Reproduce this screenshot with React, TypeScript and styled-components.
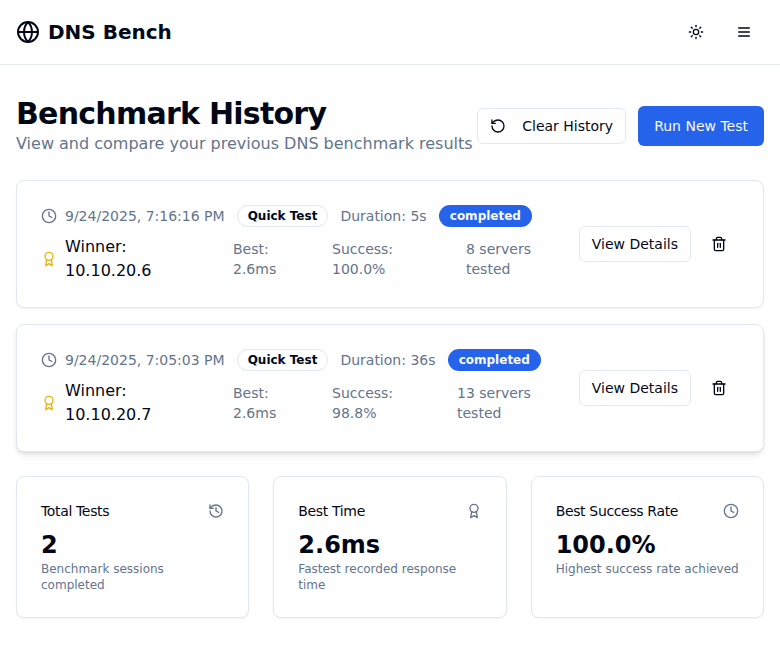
import React from 'react';
import styled, { createGlobalStyle } from 'styled-components';
import { Globe, Sun, RotateCcw, Clock, Trash2, History } from 'lucide-react';

const GlobalStyle = createGlobalStyle`
  *, *::before, *::after { box-sizing: border-box; }
  body {
    margin: 0;
    background: #fff;
    color: #020817;
    font-family: "DejaVu Sans", sans-serif;
    font-size: 16px;
    line-height: 24px;
  }
  h1, p { margin: 0; }
  svg { display: block; flex-shrink: 0; }
`;

const Glyph = styled.svg.attrs({ viewBox: '0 0 24 24' })`
  width: 16px;
  height: 16px;
  fill: none;
  stroke: currentColor;
  stroke-width: 2;
  stroke-linecap: round;
  stroke-linejoin: round;
`;

const MenuIcon = () => (
  <Glyph>
    <path d="M4 6h16M4 12h16M4 18h16" />
  </Glyph>
);

const AwardIcon = () => (
  <Glyph>
    <circle cx="12" cy="8" r="6" />
    <path d="M15.477 12.89 17 22l-5-3-5 3 1.523-9.11" />
  </Glyph>
);

const Header = styled.header`
  height: 65px;
  border-bottom: 1px solid #e2e8f0;
  padding: 0 16px;
  display: flex;
  align-items: center;
  justify-content: space-between;
`;

const Brand = styled.div`
  display: flex;
  align-items: center;
  gap: 8px;
  font-size: 20px;
  line-height: 28px;
  font-weight: 700;
`;

const HeaderActions = styled.div`
  display: flex;
  gap: 8px;
`;

const IconButton = styled.button<{ $height?: number }>`
  width: 40px;
  height: ${p => p.$height ?? 40}px;
  padding: 0;
  display: flex;
  align-items: center;
  justify-content: center;
  border: 0;
  border-radius: 6px;
  background: transparent;
  color: inherit;
`;

const Main = styled.main`
  padding: 31px 16px 32px;
`;

const PageHead = styled.div`
  display: flex;
  align-items: center;
  justify-content: space-between;
  margin-bottom: 24px;
`;

const Title = styled.h1`
  font-size: 30px;
  line-height: 36px;
  font-weight: 700;
  letter-spacing: -0.75px;
`;

const Subtitle = styled.p`
  color: #64748b;
  white-space: nowrap;
`;

const Actions = styled.div`
  display: flex;
  align-items: center;
  gap: 12px;
`;

const Button = styled.button<{ $primary?: boolean }>`
  height: ${p => (p.$primary ? 40 : 36)}px;
  padding: 0 ${p => (p.$primary ? 16 : 12)}px;
  display: flex;
  align-items: center;
  gap: 16px;
  border: ${p => (p.$primary ? '0' : '1px solid #e2e8f0')};
  border-radius: 6px;
  background: ${p => (p.$primary ? '#2563eb' : '#fff')};
  color: ${p => (p.$primary ? '#f8fafc' : '#020817')};
  font: 500 14px/20px "DejaVu Sans", sans-serif;
  white-space: nowrap;
`;

const Card = styled.section`
  border: 1px solid #e2e8f0;
  border-radius: 8px;
  background: #fff;
  padding: 24px;
  box-shadow: 0 1px 2px rgba(0, 0, 0, 0.05);
`;

const RunList = styled.div`
  display: grid;
  gap: 16px;
`;

const RunCard = styled(Card)<{ $raised?: boolean }>`
  height: 128px;
  display: flex;
  align-items: center;
  justify-content: space-between;
  box-shadow: ${p => p.$raised
    ? '0 4px 6px -1px rgba(0, 0, 0, 0.1), 0 2px 4px -2px rgba(0, 0, 0, 0.1)'
    : '0 1px 2px rgba(0, 0, 0, 0.05)'};
`;

const RunInfo = styled.div`
  display: flex;
  flex-direction: column;
  gap: 8px;
`;

const MetaRow = styled.div`
  display: flex;
  align-items: center;
  gap: 12px;
  height: 22px;
  color: #64748b;
  font-size: 14px;
  line-height: 20px;
  white-space: nowrap;
`;

const DateLabel = styled.div`
  display: flex;
  align-items: center;
  gap: 8px;
`;

const Badge = styled.span<{ $filled?: boolean }>`
  padding: 2px 10px;
  border: 1px solid ${p => (p.$filled ? 'transparent' : '#e2e8f0')};
  border-radius: 999px;
  background: ${p => (p.$filled ? '#2563eb' : 'transparent')};
  color: ${p => (p.$filled ? '#f8fafc' : '#020817')};
  font-size: 12px;
  line-height: 16px;
  font-weight: 600;
`;

const Duration = styled.span`
  margin-right: 0.2px;
`;

const ResultRow = styled.div<{ $columns: string }>`
  display: grid;
  grid-template-columns: ${p => p.$columns};
  align-items: center;
  height: 48px;
`;

const Winner = styled.div`
  display: flex;
  align-items: center;
  gap: 8px;
  svg { color: #eab308; }
`;

const Metric = styled.div`
  color: #64748b;
  font-size: 14px;
  line-height: 20px;
`;

const RunActions = styled.div`
  display: flex;
  align-items: center;
  gap: 8px;
`;

const StatGrid = styled.div`
  display: grid;
  grid-template-columns: repeat(3, minmax(0, 1fr));
  gap: 24px;
  margin-top: 24px;
`;

const StatCard = styled(Card)`
  height: 142px;
`;

const StatHead = styled.div`
  display: flex;
  align-items: center;
  justify-content: space-between;
  height: 20px;
  margin-bottom: 8px;
  font-size: 14px;
  line-height: 20px;
  letter-spacing: -0.35px;
  white-space: nowrap;
  svg { color: #64748b; }
`;

const StatValue = styled.div`
  font-size: 24px;
  line-height: 32px;
  font-weight: 700;
`;

const StatNote = styled.p`
  color: #64748b;
  font-size: 12px;
  line-height: 16px;
`;

const runs = [
  { date: '9/24/2025, 7:16:16 PM', duration: '5s', ip: '10.10.20.6', success: '100.0%', servers: '8 servers', columns: '192px 99px 134px 72px', raised: false },
  { date: '9/24/2025, 7:05:03 PM', duration: '36s', ip: '10.10.20.7', success: '98.8%', servers: '13 servers', columns: '192px 99px 125px 81px', raised: true },
];

const stats = [
  { label: 'Total Tests', value: '2', note: 'Benchmark sessions completed', icon: <History size={16} /> },
  { label: 'Best Time', value: '2.6ms', note: 'Fastest recorded response time', icon: <AwardIcon /> },
  { label: 'Best Success Rate', value: '100.0%', note: 'Highest success rate achieved', icon: <Clock size={16} /> },
];

export default function App() {
  return (
    <>
      <GlobalStyle />
      <Header>
        <Brand><Globe size={24} />DNS Bench</Brand>
        <HeaderActions>
          <IconButton aria-label="Theme"><Sun size={16} /></IconButton>
          <IconButton aria-label="Menu"><MenuIcon /></IconButton>
        </HeaderActions>
      </Header>
      <Main>
        <PageHead>
          <div>
            <Title>Benchmark History</Title>
            <Subtitle>View and compare your previous DNS benchmark results</Subtitle>
          </div>
          <Actions>
            <Button><RotateCcw size={16} />Clear History</Button>
            <Button $primary>Run New Test</Button>
          </Actions>
        </PageHead>
        <RunList>
          {runs.map(run => (
            <RunCard key={run.date} $raised={run.raised}>
              <RunInfo>
                <MetaRow>
                  <DateLabel><Clock size={16} />{run.date}</DateLabel>
                  <Badge>Quick Test</Badge>
                  <Duration>Duration: {run.duration}</Duration>
                  <Badge $filled>completed</Badge>
                </MetaRow>
                <ResultRow $columns={run.columns}>
                  <Winner><AwardIcon /><span>Winner:<br />{run.ip}</span></Winner>
                  <Metric>Best:<br />2.6ms</Metric>
                  <Metric>Success:<br />{run.success}</Metric>
                  <Metric>{run.servers}<br />tested</Metric>
                </ResultRow>
              </RunInfo>
              <RunActions>
                <Button>View Details</Button>
                <IconButton $height={36} aria-label="Delete"><Trash2 size={16} /></IconButton>
              </RunActions>
            </RunCard>
          ))}
        </RunList>
        <StatGrid>
          {stats.map(({ label, value, note, icon }) => (
            <StatCard key={label}>
              <StatHead>{label}{icon}</StatHead>
              <StatValue>{value}</StatValue>
              <StatNote>{note}</StatNote>
            </StatCard>
          ))}
        </StatGrid>
      </Main>
    </>
  );
}
